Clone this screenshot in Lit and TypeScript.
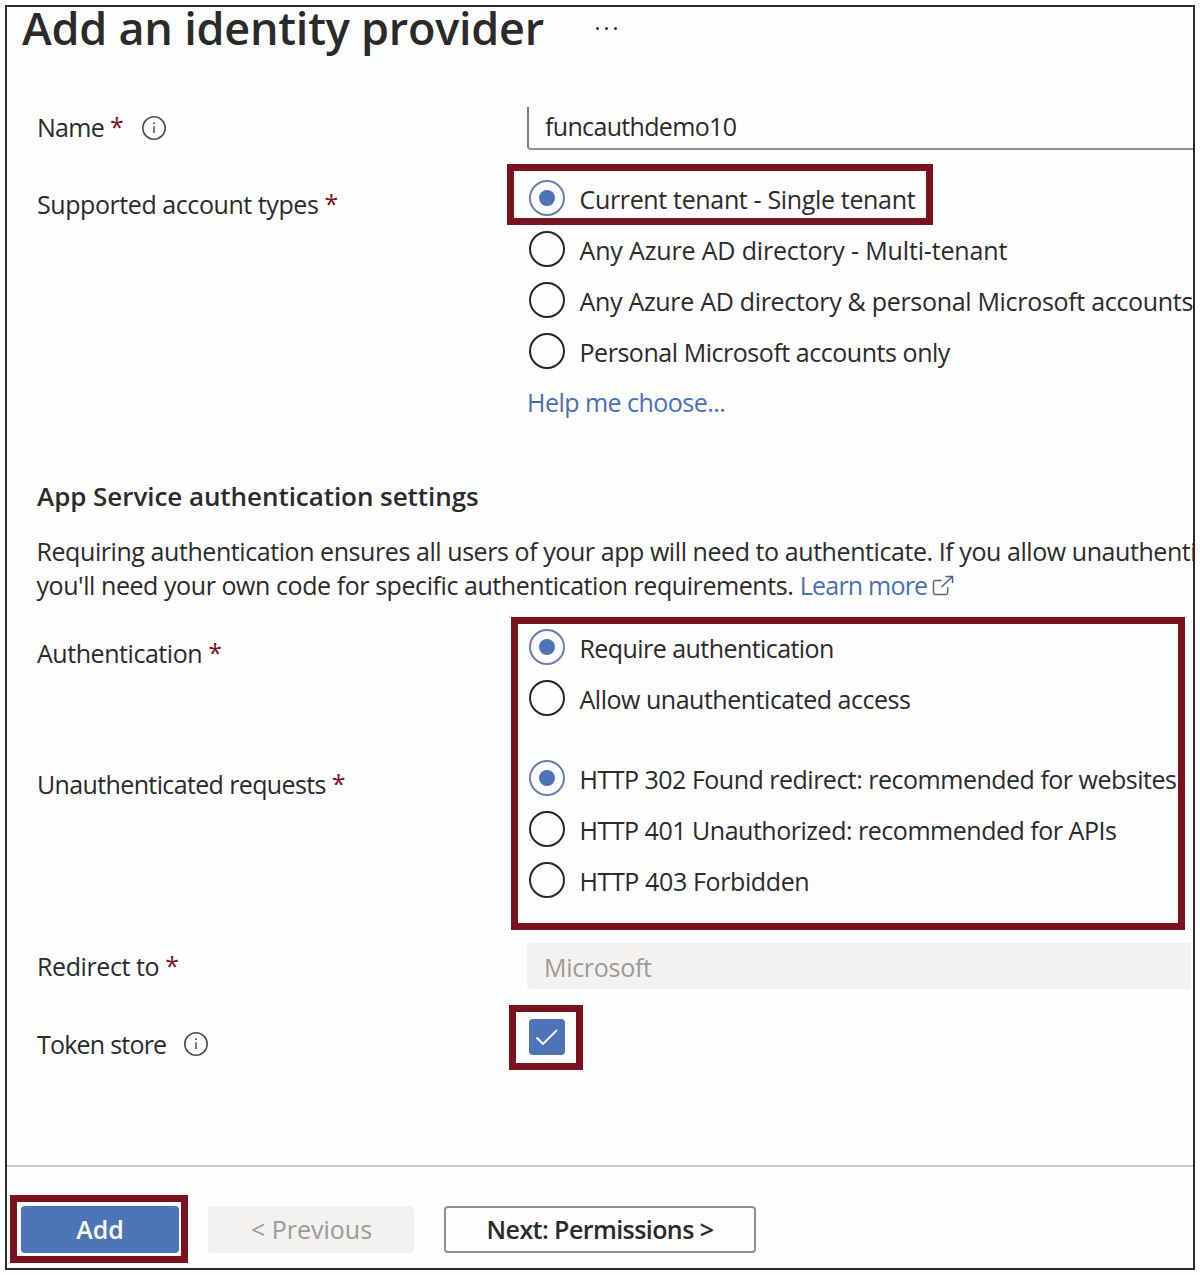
import { LitElement, html, css, nothing } from "lit";
import { customElement, property, state } from "lit/decorators.js";
import { styleMap } from "lit/directives/style-map.js";

interface Option {
  label: string;
  tracking: number;
}

const ACCOUNT_TYPES: Option[] = [
  { label: "Current tenant - Single tenant", tracking: -0.34 },
  { label: "Any Azure AD directory - Multi-tenant", tracking: -0.16 },
  { label: "Any Azure AD directory & personal Microsoft accounts", tracking: -0.31 },
  { label: "Personal Microsoft accounts only", tracking: -0.46 },
];

const AUTH_MODES: Option[] = [
  { label: "Require authentication", tracking: -0.56 },
  { label: "Allow unauthenticated access", tracking: -0.48 },
];

const UNAUTH_REQUESTS: Option[] = [
  { label: "HTTP 302 Found redirect: recommended for websites", tracking: -0.5 },
  { label: "HTTP 401 Unauthorized: recommended for APIs", tracking: -0.48 },
  { label: "HTTP 403 Forbidden", tracking: -0.38 },
];

const spaced = (text: string, tracking: number) =>
  html`<span style=${styleMap({ letterSpacing: `${tracking}px` })}>${text}</span>`;

@customElement("radio-list")
export class RadioList extends LitElement {
  static styles = css`
    :host {
      display: block;
    }
    .option {
      display: flex;
      align-items: center;
      height: 51px;
      padding-left: 1.5px;
      gap: 15px;
      white-space: nowrap;
      position: relative;
    }
    .dot {
      flex: none;
      box-sizing: border-box;
      width: 36px;
      height: 36px;
      border: 2px solid #262626;
      border-radius: 50%;
      display: grid;
      place-items: center;
      position: relative;
      top: -0.5px;
    }
    .option.on .dot {
      border-color: #6b80aa;
    }
    .option.on .dot::before {
      content: "";
      width: 16px;
      height: 16px;
      border-radius: 50%;
      background: #4d74b6;
    }
    .marked::after {
      content: "";
      position: absolute;
      left: -20px;
      top: -9.5px;
      width: 426px;
      height: 61.5px;
      box-sizing: border-box;
      border: 7px solid #7b121f;
    }
  `;

  @property({ attribute: false }) options: Option[] = [];
  @property({ type: Boolean }) marked = false;
  @state() private selected = 0;

  render() {
    return this.options.map(
      (o, i) => html`<div
        class="option ${i === this.selected ? "on" : ""} ${this.marked && i === 0 ? "marked" : ""}"
        @click=${() => (this.selected = i)}
      >
        <span class="dot"></span>${spaced(o.label, o.tracking)}
      </div>`
    );
  }
}

@customElement("app-root")
export class AppRoot extends LitElement {
  static styles = css`
    :host {
      display: block;
      box-sizing: border-box;
      width: 1200px;
      height: 1275px;
      padding: 5px;
      background: #fefefe;
      color: #2b2a2b;
      font-family: "Open Sans", "Noto Sans", sans-serif;
      font-size: 25px;
    }
    .frame {
      box-sizing: border-box;
      height: 1265px;
      border: 2px solid #2a2a2a;
      overflow: hidden;
      display: flex;
      flex-direction: column;
      white-space: nowrap;
      position: relative;
    }
    .title {
      height: 100px;
      display: flex;
      padding-left: 15px;
      line-height: 42px;
    }
    .title h1 {
      margin: 0;
      font-size: 45px;
      font-weight: 600;
      letter-spacing: -0.24px;
    }
    .more {
      display: flex;
      gap: 6px;
      margin: 20px 0 0 52px;
    }
    .more i {
      width: 3px;
      height: 3px;
      border-radius: 50%;
      background: #333;
    }
    .row {
      display: grid;
      grid-template-columns: 490px 1fr;
      padding-left: 30px;
    }
    .label {
      display: flex;
      height: 40px;
      line-height: 41px;
    }
    .label.deep {
      padding-top: 11px;
      line-height: 40px;
    }
    .star {
      color: #7b121f;
      margin-left: 6px;
      font-size: 25px;
      position: relative;
      top: -1px;
    }
    .info {
      width: 26px;
      height: 26px;
      margin: 8px 0 0 17px;
    }
    .input {
      box-sizing: border-box;
      height: 43px;
      border-left: 2px solid #7a7a7a;
      border-bottom: 2px solid #8f8f8f;
      border-bottom-left-radius: 4px;
      padding-left: 16px;
      line-height: 38px;
    }
    .accounts {
      margin-top: 23px;
    }
    .help {
      line-height: 50px;
      height: 48px;
    }
    .link {
      color: #4a70b4;
    }
    h2 {
      margin: 51px 0 0 30px;
      font-size: 26px;
      font-weight: 600;
      line-height: 40px;
      letter-spacing: -0.06px;
    }
    .note {
      margin: 17px 0 0 29.5px;
      line-height: 34px;
      position: relative;
      top: 0.5px;
    }
    .note svg {
      width: 22px;
      height: 22px;
      margin-left: 5px;
      vertical-align: -2px;
    }
    .auth {
      margin-top: 21px;
      position: relative;
    }
    .auth::after {
      content: "";
      position: absolute;
      left: 504px;
      top: -5.5px;
      width: 674px;
      height: 313.5px;
      box-sizing: border-box;
      border: 7px solid #7b121f;
    }
    .requests {
      margin-top: 29px;
    }
    .redirect {
      margin-top: 37px;
    }
    .redirect .label {
      padding-top: 3px;
    }
    .disabled {
      height: 46px;
      line-height: 49px;
      margin-right: 2px;
      padding-left: 17px;
      background: #f3f2f1;
      color: #9b9a99;
      border-radius: 4px 0 0 4px;
    }
    .token {
      margin-top: 30px;
    }
    .token .label {
      padding-top: 5px;
      line-height: 40px;
    }
    .token .info {
      margin-top: 7px;
    }
    .check {
      position: relative;
      width: 36px;
      height: 36px;
      margin-left: 2px;
      border-radius: 4px;
      background: #4d74b6;
    }
    .check svg {
      display: block;
      width: 36px;
      height: 36px;
    }
    .check::after {
      content: "";
      position: absolute;
      left: -20px;
      top: -14px;
      width: 74px;
      height: 65px;
      box-sizing: border-box;
      border: 7px solid #7b121f;
    }
    .footer {
      margin-top: auto;
      height: 103px;
      box-sizing: border-box;
      border-top: 2px solid #c9c9c7;
      display: flex;
      padding: 39px 0 0 14px;
    }
    .btn {
      box-sizing: border-box;
      height: 47px;
      line-height: 46px;
      border-radius: 4px;
      text-align: center;
      position: relative;
    }
    .add {
      width: 158px;
      background: #4d74b6;
      color: #fff;
      font-weight: 600;
    }
    .add::after {
      content: "";
      position: absolute;
      left: -11.5px;
      top: -11px;
      width: 178px;
      height: 68px;
      box-sizing: border-box;
      border: 7px solid #7b121f;
    }
    .prev {
      width: 206px;
      margin-left: 29px;
      padding-left: 1px;
      background: #f3f2f1;
      color: #9b9a99;
    }
    .next {
      width: 312px;
      margin-left: 30px;
      border: 2px solid #8f8f8f;
      line-height: 42px;
      font-weight: 600;
      letter-spacing: -0.58px;
    }
  `;

  private label(text: string, tracking: number, required: boolean, info = false) {
    return html`${spaced(text, tracking)}${required ? html`<span class="star">*</span>` : nothing}${info
      ? html`<svg class="info" viewBox="0 0 26 26" fill="none" stroke="#505050">
          <circle cx="13" cy="13" r="11.2" stroke-width="1.6" />
          <path d="M13 11.200v6.800" stroke-width="1.500" />
          <circle cx="13" cy="8.200" r="1" fill="#505050" stroke="none" />
        </svg>`
      : nothing}`;
  }

  render() {
    return html`<div class="frame">
      <div class="title">
        <h1>Add an identity provider</h1>
        <span class="more"><i></i><i></i><i></i></span>
      </div>

      <div class="row">
        <div class="label">${this.label("Name", -0.7, true, true)}</div>
        <div class="input">${spaced("funcauthdemo10", -0.66)}</div>
      </div>

      <div class="row accounts">
        <div class="label deep">${this.label("Supported account types", -0.43, true)}</div>
        <div>
          <radio-list marked .options=${ACCOUNT_TYPES}></radio-list>
          <div class="help link">${spaced("Help me choose...", -0.53)}</div>
        </div>
      </div>

      <h2>App Service authentication settings</h2>
      <div class="note">
        <div>
          ${spaced(
            "Requiring authentication ensures all users of your app will need to authenticate. If you allow unauthenticated",
            -0.43
          )}
        </div>
        <div>
          ${spaced("you'll need your own code for specific authentication requirements.", -0.43)}
          <span class="link">${spaced("Learn more", -0.8)}</span
          ><svg viewBox="0 0 22 22" fill="none" stroke="#666" stroke-width="1.5">
            <path d="M9.500 5.500H3.200Q1.500 5.500 1.500 7.200V17.800Q1.500 19.500 3.200 19.500H14Q15.700 19.500 15.700 17.800V12" />
            <path d="M9.500 12L20 2M13.500 1.500H20.500V8" stroke="#4f5f80" />
          </svg>
        </div>
      </div>

      <div class="auth">
        <div class="row">
          <div class="label deep">${this.label("Authentication", -0.45, true)}</div>
          <radio-list .options=${AUTH_MODES}></radio-list>
        </div>
        <div class="row requests">
          <div class="label deep">${this.label("Unauthenticated requests", -0.63, true)}</div>
          <radio-list .options=${UNAUTH_REQUESTS}></radio-list>
        </div>
      </div>

      <div class="row redirect">
        <div class="label">${this.label("Redirect to", -0.4, true)}</div>
        <div class="disabled">${spaced("Microsoft", -0.3)}</div>
      </div>

      <div class="row token">
        <div class="label">${this.label("Token store", -0.78, false, true)}</div>
        <div class="check">
          <svg viewBox="0 0 36 36" fill="none" stroke="#fff" stroke-width="1.8">
            <path d="M7.500 18.500L14 25L28 11" />
          </svg>
        </div>
      </div>

      <div class="footer">
        <div class="btn add">Add</div>
        <div class="btn prev">&lt; Previous</div>
        <div class="btn next">Next: Permissions &gt;</div>
      </div>
    </div>`;
  }
}
